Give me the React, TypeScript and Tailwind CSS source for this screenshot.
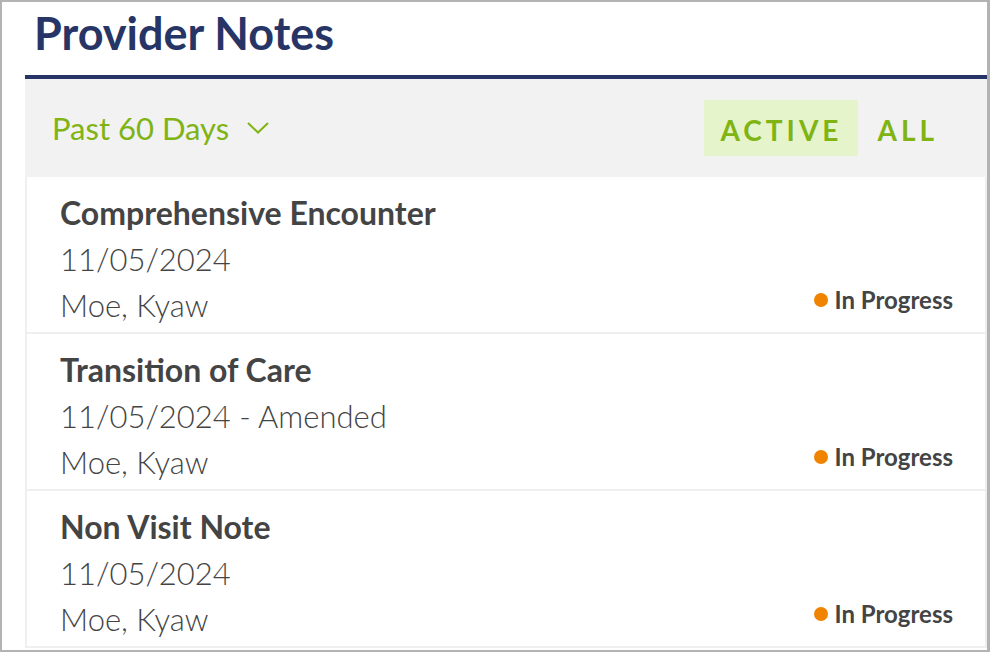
const NOTES = [
  { title: "Comprehensive Encounter", date: "11/05/2024", provider: "Moe, Kyaw", status: "In Progress" },
  { title: "Transition of Care", date: "11/05/2024 - Amended", provider: "Moe, Kyaw", status: "In Progress" },
  { title: "Non Visit Note", date: "11/05/2024", provider: "Moe, Kyaw", status: "In Progress" },
];

function NoteRow({ note }: { note: (typeof NOTES)[number] }) {
  return (
    <div className="flex items-end justify-between border-b-2 border-[#efefef] pl-[33px] pr-[32px] pt-[13px] pb-[4px]">
      <div className="text-[#444444]">
        <div className="text-[32px] font-bold leading-[46px]">{note.title}</div>
        <div className="text-[31px] font-light leading-[46px]">{note.date}</div>
        <div className="text-[31px] font-light leading-[46px]">{note.provider}</div>
      </div>
      <div className="mb-[10px] flex items-center gap-[7px]">
        <span className="h-[14px] w-[14px] rounded-full bg-[#f08300]" />
        <span className="text-[24px] font-bold text-[#444444]">{note.status}</span>
      </div>
    </div>
  );
}

export default function App() {
  return (
    <div
      className="h-[652px] w-[990px] overflow-hidden border-2 border-r-[3px] border-[#b3b3b3] bg-white pl-[23px]"
      style={{ fontFamily: "Lato, 'Open Sans', sans-serif" }}
    >
      {/* Header */}
      <div className="h-[73px] pl-[9px]">
        <h1 className="pt-[5px] text-[45px] font-bold leading-[52px] text-[#263566]">Provider Notes</h1>
      </div>
      <div className="h-[4px] bg-[#263566]" />

      {/* Filter bar */}
      <div className="flex h-[98px] items-center justify-between bg-[#f2f2f2] pl-[27px] pr-[33px]">
        <button className="flex items-center gap-[18px] text-[31px] text-[#80b414]">
          <span>Past 60 Days</span>
          <svg width="22" height="12" viewBox="0 0 22 12" fill="none" stroke="currentColor" strokeWidth="2">
            <polyline points="1,1 11,10.5 21,1" />
          </svg>
        </button>
        <div className="flex items-center gap-[3px]">
          <button className="h-[56px] bg-[#e6f4cc] pt-[3px] pl-[16px] pr-[16px] text-[28px] font-bold tracking-[4px] text-[#80b414]">
            ACTIVE
          </button>
          <button className="h-[56px] pt-[3px] pl-[16px] pr-[16px] text-[28px] font-bold tracking-[4px] text-[#80b414]">
            ALL
          </button>
        </div>
      </div>

      {/* Notes */}
      <div className="border-x-2 border-[#efefef]">
        {NOTES.map((n) => (
          <NoteRow key={n.title} note={n} />
        ))}
      </div>
    </div>
  );
}
